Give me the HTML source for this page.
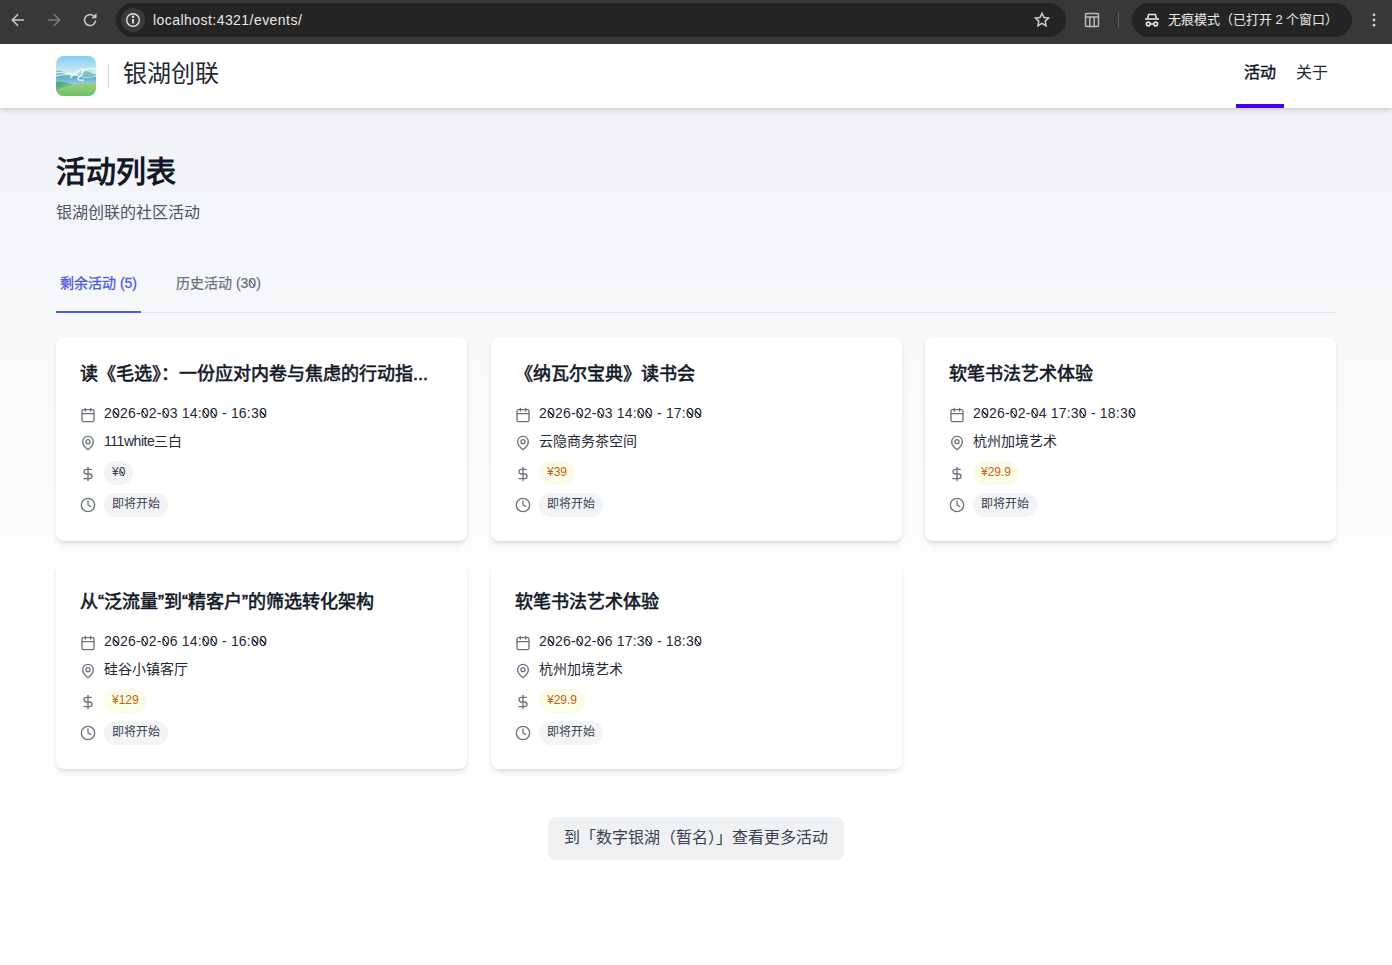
<!DOCTYPE html>
<html lang="zh-CN">
<head>
<meta charset="utf-8">
<style>
*{box-sizing:border-box;margin:0;padding:0}
html,body{width:1392px;height:965px;overflow:hidden}
body{font-family:"Liberation Sans",sans-serif;background:#fff;position:relative;color:#111827}
.chrome{position:absolute;left:0;top:0;width:1392px;height:44px;background:#383838}
.omni{position:absolute;left:116px;top:3px;width:950px;height:34px;border-radius:17px;background:#242424}
.info{position:absolute;left:121px;top:8px;width:24px;height:24px;border-radius:12px;background:#3b3b3b}
.url{position:absolute;left:153px;top:11px;font-size:14px;line-height:18px;color:#e8e8e8;letter-spacing:.45px}
.incog{position:absolute;left:1132px;top:3px;width:220px;height:34px;border-radius:17px;background:#242424}
.incog-t{position:absolute;left:1168px;top:11px;font-size:13px;line-height:18px;color:#e8e8e8}
.sep{position:absolute;left:1118px;top:12px;width:1px;height:16px;background:#5a5a5a}
.ico{position:absolute}

.header{position:absolute;left:0;top:44px;width:1392px;height:64px;background:#fff;box-shadow:0 1px 2px rgba(0,0,0,.08),0 4px 6px -1px rgba(0,0,0,.1);z-index:2}
.logo{position:absolute;left:56px;top:12px;width:40px;height:40px;border-radius:8px;overflow:hidden}
.vdiv{position:absolute;left:108px;top:20px;width:1px;height:24px;background:#d1d5db}
.brand{position:absolute;left:123px;top:14px;font-size:24px;line-height:32px;color:#1f2937}
.nav{position:absolute;top:17px;font-size:16px;line-height:24px;color:#1f2937}
.nav1{left:1244px;color:#111827;-webkit-text-stroke:.45px #111827}
.nav2{left:1296px}
.navline{position:absolute;left:1236px;top:60px;width:48px;height:4px;background:#4500f4}

.main{position:absolute;left:0;top:108px;width:1392px;height:857px;background:linear-gradient(to bottom,#f2f3f7 0px,#ffffff 512px)}
h1{position:absolute;left:56px;top:46px;font-size:30px;line-height:36px;font-weight:bold;color:#111827}
.sub{position:absolute;left:56px;top:93px;font-size:16px;line-height:24px;color:#4b5563}
.tabbar{position:absolute;left:56px;top:204px;width:1280px;height:1px;background:#e5e7eb}
.tab{position:absolute;top:165px;font-size:14px;line-height:20px}
.tab1{left:60px;color:#4b5ae6;-webkit-text-stroke:.3px #4b5ae6}
.tab2{left:176px;color:#6b7280;-webkit-text-stroke:.25px #6b7280}
.tabline{position:absolute;left:56px;top:203px;width:85px;height:2px;background:#4a5cec}

.card{position:absolute;width:411px;height:204px;background:#fff;border-radius:8px;box-shadow:0 4px 6px -1px rgba(0,0,0,.1),0 2px 4px -2px rgba(0,0,0,.1),0 0 1px rgba(0,0,0,.06)}
.ct{position:absolute;left:24px;top:24.5px;font-size:18px;line-height:24px;color:#111827;-webkit-text-stroke:.6px #111827;white-space:nowrap}
.row{position:absolute;left:24px;height:20px;width:360px}
.row svg{position:absolute;left:0;top:2px}
.rt{position:absolute;left:24px;top:-1px;font-size:14px;line-height:20px;color:#1f2937;white-space:nowrap}
.badge{position:absolute;left:24px;top:-2px;height:24px;border-radius:12px;padding:0 8px;font-size:12px;line-height:23px;white-space:nowrap}
.bg{background:#f3f4f6;color:#374151}
.by{background:#fbfce8;color:#c2650f}

.more{position:absolute;left:548px;top:709px;width:296px;height:43px;border-radius:8px;background:#f0f1f3;color:#374151;font-size:16px;line-height:42px;text-align:center}
.z{position:relative}
.z::after{content:"";position:absolute;left:18%;right:18%;top:30%;bottom:24%;background:linear-gradient(to bottom left,transparent calc(50% - .55px),currentColor calc(50% - .55px),currentColor calc(50% + .55px),transparent calc(50% + .55px))}
</style>
</head>
<body>
<div class="chrome">
  <svg class="ico" style="left:8px;top:10px" width="20" height="20" viewBox="0 0 20 20" fill="none" stroke="#c7c7c7" stroke-width="1.6"><path d="M16 10H4.5M10 4.3L4.3 10l5.7 5.7"/></svg>
  <svg class="ico" style="left:44px;top:10px" width="20" height="20" viewBox="0 0 20 20" fill="none" stroke="#7a7a7a" stroke-width="1.6"><path d="M4 10h11.5M10 4.3l5.7 5.7-5.7 5.7"/></svg>
  <svg class="ico" style="left:80px;top:10px" width="20" height="20" viewBox="0 0 20 20" fill="none" stroke="#c7c7c7" stroke-width="1.6"><path d="M15.5 10.5A5.5 5.5 0 1 1 13.6 5.9"/><path d="M16.2 3.6V8h-4.4z" fill="#c7c7c7" stroke-width="0.6"/></svg>
  <div class="omni"></div>
  <div class="info"></div>
  <svg class="ico" style="left:124px;top:11px" width="18" height="18" viewBox="0 0 18 18" fill="none" stroke="#e3e3e3" stroke-width="1.4"><circle cx="9" cy="9" r="6.3"/><path d="M9 8v4.5" stroke-width="1.8"/><circle cx="9" cy="5.8" r=".6" fill="#e3e3e3"/></svg>
  <div class="url">localhost:4321/events/</div>
  <svg class="ico" style="left:1032px;top:10px" width="20" height="20" viewBox="0 0 20 20" fill="none" stroke="#d0d0d0" stroke-width="1.5"><path d="M10 3.2l2 4.3 4.6.5-3.4 3.1.9 4.6L10 13.4l-4.1 2.3.9-4.6L3.4 8l4.6-.5z"/></svg>
  <svg class="ico" style="left:1082px;top:10px" width="20" height="20" viewBox="0 0 20 20" fill="none" stroke="#bdbdbd" stroke-width="1.5"><rect x="3.5" y="3.5" width="13" height="13" rx="1.5"/><path d="M3.5 7h13M7.8 7v9.5M12.2 7v9.5"/></svg>
  <div class="sep"></div>
  <div class="incog"></div>
  <svg class="ico" style="left:1142px;top:10px" width="20" height="20" viewBox="0 0 20 20" fill="none" stroke="#e3e3e3" stroke-width="1.6"><path d="M5.5 8.5l1.2-4h6.6l1.2 4"/><path d="M3 9h14"/><circle cx="6.3" cy="14" r="1.9"/><circle cx="13.7" cy="14" r="1.9"/><path d="M8.2 14h3.6"/></svg>
  <div class="incog-t">无痕模式（已打开 2 个窗口）</div>
  <svg class="ico" style="left:1366px;top:10px" width="16" height="20" viewBox="0 0 16 20" fill="#d0d0d0"><circle cx="8" cy="4.8" r="1.4"/><circle cx="8" cy="10" r="1.4"/><circle cx="8" cy="15.2" r="1.4"/></svg>
</div>

<div class="header">
  <div class="logo">
    <svg width="40" height="40" viewBox="0 0 40 40">
      <defs>
        <linearGradient id="sky" x1="0" y1="0" x2="0" y2="1"><stop offset="0" stop-color="#86cdee"/><stop offset=".35" stop-color="#c4e6f4"/><stop offset=".5" stop-color="#e4f3f6"/><stop offset=".52" stop-color="#5aa9dc"/><stop offset=".68" stop-color="#8fcbe6"/><stop offset="1" stop-color="#a6d6e4"/></linearGradient>
        <linearGradient id="hill" x1="0" y1="0" x2="1" y2="1"><stop offset="0" stop-color="#3d9f86"/><stop offset=".5" stop-color="#7cc27c"/><stop offset="1" stop-color="#a8d576"/></linearGradient>
        <linearGradient id="hill2" x1="0" y1="0" x2="0" y2="1"><stop offset="0" stop-color="#9dd27a"/><stop offset="1" stop-color="#6fbf6a"/></linearGradient>
      </defs>
      <rect width="40" height="40" fill="url(#sky)"/>
      <path d="M0 15 C6 13 10 19 16 19 S24 14 30 15 S38 19 40 18 V22 C34 23 30 20 24 21 S10 23 0 20Z" fill="#5cb7a4" opacity=".75"/>
      <path d="M0 17 C8 14 14 22 22 18 S32 11 40 13" stroke="#fff" stroke-width="1" fill="none" opacity=".9"/>
      <path d="M0 20 C8 18 14 17 20 19 S30 23 40 20" stroke="#fff" stroke-width=".8" fill="none" opacity=".85"/>
      <path d="M14 22 C18 18 22 14 26 13 C29 12 28 17 24 20 C20 23 22 25 28 24" stroke="#fff" stroke-width="1.1" fill="none"/>
      <path d="M0 26 C8 24 14 28 22 30 V40 H0Z" fill="url(#hill)"/>
      <path d="M0 34 C12 30 26 26 40 27 V40 H0Z" fill="url(#hill2)"/>
    </svg>
  </div>
  <div class="vdiv"></div>
  <div class="brand">银湖创联</div>
  <div class="nav nav1">活动</div>
  <div class="nav nav2">关于</div>
  <div class="navline"></div>
</div>

<div class="main">
  <h1>活动列表</h1>
  <div class="sub">银湖创联的社区活动</div>
  <div class="tab tab1">剩余活动 (5)</div>
  <div class="tab tab2">历史活动 (3<span class="z">0</span>)</div>
  <div class="tabbar"></div>
  <div class="tabline"></div>
  <div class="card" style="left:56px;top:229px">
    <div class="ct">读《毛选》：一份应对内卷与焦虑的行动指...</div>
    <div class="row" style="top:67px"><svg style="top:3px" width="16" height="16" viewBox="0 0 24 24" stroke="#6b7280" stroke-width="2" stroke-linecap="round" stroke-linejoin="round" fill="none"><rect width="18" height="18" x="3" y="4" rx="2"/><path d="M16 2v4M8 2v4M3 10h18"/></svg><div class="rt" style="letter-spacing:.2px">2<span class="z">0</span>26-<span class="z">0</span>2-<span class="z">0</span>3 14:<span class="z">0</span><span class="z">0</span> - 16:3<span class="z">0</span></div></div>
    <div class="row" style="top:95px"><svg style="top:3px" width="16" height="16" viewBox="0 0 24 24" stroke="#6b7280" stroke-width="2" stroke-linecap="round" stroke-linejoin="round" fill="none"><path d="M20 10c0 6-8 12-8 12s-8-6-8-12a8 8 0 0 1 16 0Z"/><circle cx="12" cy="10" r="3"/></svg><div class="rt"><span style="letter-spacing:-.45px">111white</span>三白</div></div>
    <div class="row" style="top:126px"><svg style="top:3px" width="16" height="16" viewBox="0 0 24 24" stroke="#6b7280" stroke-width="2" stroke-linecap="round" stroke-linejoin="round" fill="none"><path d="M12 2v20"/><path d="M17 5H9.5a3.5 3.5 0 0 0 0 7h5a3.5 3.5 0 0 1 0 7H6"/></svg><div class="badge bg">¥<span class="z">0</span></div></div>
    <div class="row" style="top:158px"><svg width="16" height="16" viewBox="0 0 24 24" stroke="#6b7280" stroke-width="2" stroke-linecap="round" stroke-linejoin="round" fill="none"><circle cx="12" cy="12" r="10"/><path d="M12 6v6l4 2"/></svg><div class="badge bg">即将开始</div></div>
  </div>
  <div class="card" style="left:491px;top:229px">
    <div class="ct">《纳瓦尔宝典》读书会</div>
    <div class="row" style="top:67px"><svg style="top:3px" width="16" height="16" viewBox="0 0 24 24" stroke="#6b7280" stroke-width="2" stroke-linecap="round" stroke-linejoin="round" fill="none"><rect width="18" height="18" x="3" y="4" rx="2"/><path d="M16 2v4M8 2v4M3 10h18"/></svg><div class="rt" style="letter-spacing:.2px">2<span class="z">0</span>26-<span class="z">0</span>2-<span class="z">0</span>3 14:<span class="z">0</span><span class="z">0</span> - 17:<span class="z">0</span><span class="z">0</span></div></div>
    <div class="row" style="top:95px"><svg style="top:3px" width="16" height="16" viewBox="0 0 24 24" stroke="#6b7280" stroke-width="2" stroke-linecap="round" stroke-linejoin="round" fill="none"><path d="M20 10c0 6-8 12-8 12s-8-6-8-12a8 8 0 0 1 16 0Z"/><circle cx="12" cy="10" r="3"/></svg><div class="rt">云隐商务茶空间</div></div>
    <div class="row" style="top:126px"><svg style="top:3px" width="16" height="16" viewBox="0 0 24 24" stroke="#6b7280" stroke-width="2" stroke-linecap="round" stroke-linejoin="round" fill="none"><path d="M12 2v20"/><path d="M17 5H9.5a3.5 3.5 0 0 0 0 7h5a3.5 3.5 0 0 1 0 7H6"/></svg><div class="badge by">¥39</div></div>
    <div class="row" style="top:158px"><svg width="16" height="16" viewBox="0 0 24 24" stroke="#6b7280" stroke-width="2" stroke-linecap="round" stroke-linejoin="round" fill="none"><circle cx="12" cy="12" r="10"/><path d="M12 6v6l4 2"/></svg><div class="badge bg">即将开始</div></div>
  </div>
  <div class="card" style="left:925px;top:229px">
    <div class="ct">软笔书法艺术体验</div>
    <div class="row" style="top:67px"><svg style="top:3px" width="16" height="16" viewBox="0 0 24 24" stroke="#6b7280" stroke-width="2" stroke-linecap="round" stroke-linejoin="round" fill="none"><rect width="18" height="18" x="3" y="4" rx="2"/><path d="M16 2v4M8 2v4M3 10h18"/></svg><div class="rt" style="letter-spacing:.2px">2<span class="z">0</span>26-<span class="z">0</span>2-<span class="z">0</span>4 17:3<span class="z">0</span> - 18:3<span class="z">0</span></div></div>
    <div class="row" style="top:95px"><svg style="top:3px" width="16" height="16" viewBox="0 0 24 24" stroke="#6b7280" stroke-width="2" stroke-linecap="round" stroke-linejoin="round" fill="none"><path d="M20 10c0 6-8 12-8 12s-8-6-8-12a8 8 0 0 1 16 0Z"/><circle cx="12" cy="10" r="3"/></svg><div class="rt">杭州加境艺术</div></div>
    <div class="row" style="top:126px"><svg style="top:3px" width="16" height="16" viewBox="0 0 24 24" stroke="#6b7280" stroke-width="2" stroke-linecap="round" stroke-linejoin="round" fill="none"><path d="M12 2v20"/><path d="M17 5H9.5a3.5 3.5 0 0 0 0 7h5a3.5 3.5 0 0 1 0 7H6"/></svg><div class="badge by">¥29.9</div></div>
    <div class="row" style="top:158px"><svg width="16" height="16" viewBox="0 0 24 24" stroke="#6b7280" stroke-width="2" stroke-linecap="round" stroke-linejoin="round" fill="none"><circle cx="12" cy="12" r="10"/><path d="M12 6v6l4 2"/></svg><div class="badge bg">即将开始</div></div>
  </div>
  <div class="card" style="left:56px;top:457px">
    <div class="ct">从“泛流量”到“精客户”的筛选转化架构</div>
    <div class="row" style="top:67px"><svg style="top:3px" width="16" height="16" viewBox="0 0 24 24" stroke="#6b7280" stroke-width="2" stroke-linecap="round" stroke-linejoin="round" fill="none"><rect width="18" height="18" x="3" y="4" rx="2"/><path d="M16 2v4M8 2v4M3 10h18"/></svg><div class="rt" style="letter-spacing:.2px">2<span class="z">0</span>26-<span class="z">0</span>2-<span class="z">0</span>6 14:<span class="z">0</span><span class="z">0</span> - 16:<span class="z">0</span><span class="z">0</span></div></div>
    <div class="row" style="top:95px"><svg style="top:3px" width="16" height="16" viewBox="0 0 24 24" stroke="#6b7280" stroke-width="2" stroke-linecap="round" stroke-linejoin="round" fill="none"><path d="M20 10c0 6-8 12-8 12s-8-6-8-12a8 8 0 0 1 16 0Z"/><circle cx="12" cy="10" r="3"/></svg><div class="rt">硅谷小镇客厅</div></div>
    <div class="row" style="top:126px"><svg style="top:3px" width="16" height="16" viewBox="0 0 24 24" stroke="#6b7280" stroke-width="2" stroke-linecap="round" stroke-linejoin="round" fill="none"><path d="M12 2v20"/><path d="M17 5H9.5a3.5 3.5 0 0 0 0 7h5a3.5 3.5 0 0 1 0 7H6"/></svg><div class="badge by">¥129</div></div>
    <div class="row" style="top:158px"><svg width="16" height="16" viewBox="0 0 24 24" stroke="#6b7280" stroke-width="2" stroke-linecap="round" stroke-linejoin="round" fill="none"><circle cx="12" cy="12" r="10"/><path d="M12 6v6l4 2"/></svg><div class="badge bg">即将开始</div></div>
  </div>
  <div class="card" style="left:491px;top:457px">
    <div class="ct">软笔书法艺术体验</div>
    <div class="row" style="top:67px"><svg style="top:3px" width="16" height="16" viewBox="0 0 24 24" stroke="#6b7280" stroke-width="2" stroke-linecap="round" stroke-linejoin="round" fill="none"><rect width="18" height="18" x="3" y="4" rx="2"/><path d="M16 2v4M8 2v4M3 10h18"/></svg><div class="rt" style="letter-spacing:.2px">2<span class="z">0</span>26-<span class="z">0</span>2-<span class="z">0</span>6 17:3<span class="z">0</span> - 18:3<span class="z">0</span></div></div>
    <div class="row" style="top:95px"><svg style="top:3px" width="16" height="16" viewBox="0 0 24 24" stroke="#6b7280" stroke-width="2" stroke-linecap="round" stroke-linejoin="round" fill="none"><path d="M20 10c0 6-8 12-8 12s-8-6-8-12a8 8 0 0 1 16 0Z"/><circle cx="12" cy="10" r="3"/></svg><div class="rt">杭州加境艺术</div></div>
    <div class="row" style="top:126px"><svg style="top:3px" width="16" height="16" viewBox="0 0 24 24" stroke="#6b7280" stroke-width="2" stroke-linecap="round" stroke-linejoin="round" fill="none"><path d="M12 2v20"/><path d="M17 5H9.5a3.5 3.5 0 0 0 0 7h5a3.5 3.5 0 0 1 0 7H6"/></svg><div class="badge by">¥29.9</div></div>
    <div class="row" style="top:158px"><svg width="16" height="16" viewBox="0 0 24 24" stroke="#6b7280" stroke-width="2" stroke-linecap="round" stroke-linejoin="round" fill="none"><circle cx="12" cy="12" r="10"/><path d="M12 6v6l4 2"/></svg><div class="badge bg">即将开始</div></div>
  </div>
  <div class="more">到「数字银湖（暂名）」查看更多活动</div>
</div>
</body>
</html>
